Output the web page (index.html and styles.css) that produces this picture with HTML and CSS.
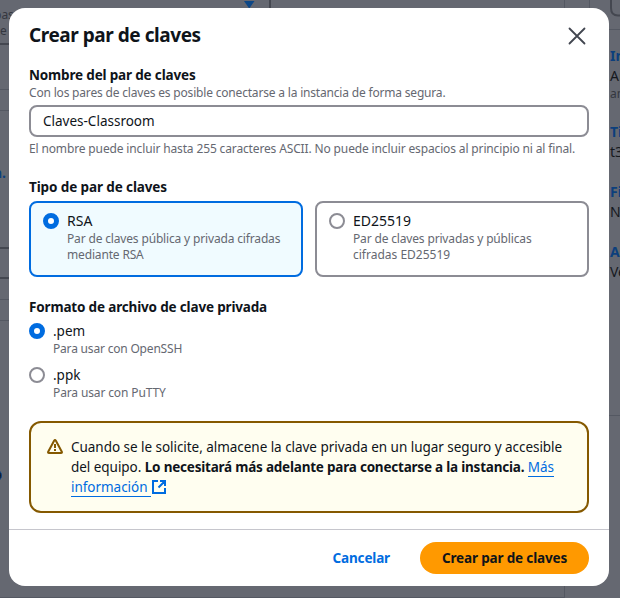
FILE: index.html
```html
<!DOCTYPE html>
<html lang="es">
<head>
<meta charset="utf-8">
<title>Crear par de claves</title>
<link rel="stylesheet" href="styles.css">
</head>
<body>
<svg class="backdrop" width="620" height="598" viewBox="0 0 620 598" aria-hidden="true">
  <g class="rule">
    <path d="M564.5 0V598M589.5 0V9M0 89.5H10M0 110.5H10M0 299.5H10M0 320.5H10M608 29.5H620M608 415.5H620M0 597.5H564"/>
  </g>
  <g class="frame">
    <path d="M270 0V10M0 44H10M0 248H10M0 278H10M611 0V8Q611 15.500 618 15.500H620"/>
  </g>
  <path class="caret" d="M244 1H254.500L249.250 8.500Z"/>
  <circle class="dot" cx="-4.500" cy="475.500" r="6"/>
  <g class="muted"><text x="-6" y="19">bas</text><text x="0" y="35">e</text><text x="610" y="98">am</text></g>
  <g class="link"><text x="-7" y="178">n.</text><text x="610" y="61">In</text><text x="610" y="137">Ti</text><text x="610" y="197">Fi</text><text x="610" y="257">A</text></g>
  <g class="value"><text x="610" y="81">Am</text><text x="610" y="157">t3</text><text x="610" y="217">N</text><text x="610" y="277">Ve</text></g>
</svg>
<main class="modal">
  <header class="modal-header">
    <h1>Crear par de claves</h1>
    <svg class="close" width="18" height="18" viewBox="0 0 18 18"><path d="M1.500 1.500L16.500 16.500M16.500 1.500L1.500 16.500"/></svg>
  </header>
  <div class="modal-body">
    <section class="field">
      <div class="label">Nombre del par de claves</div>
      <div class="hint hint-name">Con los pares de claves es posible conectarse a la instancia de forma segura.</div>
      <div class="input">Claves-Classroom</div>
      <div class="hint hint-rule">El nombre puede incluir hasta 255 caracteres ASCII. No puede incluir espacios al principio ni al final.</div>
    </section>
    <section class="field">
      <div class="label label-type">Tipo de par de claves</div>
      <div class="tiles">
        <div class="tile selected">
          <span class="radio on"></span>
          <div><div class="option">RSA</div><div class="hint">Par de claves pública y privada cifradas<br>mediante RSA</div></div>
        </div>
        <div class="tile">
          <span class="radio"></span>
          <div><div class="option">ED25519</div><div class="hint">Par de claves privadas y públicas<br><span class="plain">cifradas ED25519</span></div></div>
        </div>
      </div>
    </section>
    <section class="field">
      <div class="label">Formato de archivo de clave privada</div>
      <div class="choices">
        <div class="choice">
          <span class="radio on"></span>
          <div><div class="option option-format">.pem</div><div class="hint hint-pem">Para usar con OpenSSH</div></div>
        </div>
        <div class="choice">
          <span class="radio"></span>
          <div><div class="option option-format">.ppk</div><div class="hint hint-ppk">Para usar con PuTTY</div></div>
        </div>
      </div>
    </section>
    <div class="alert">
      <svg class="warning" width="16" height="16" viewBox="0 0 16 16"><path d="M7.100 1.700Q8 0.400 8.900 1.700L14.800 12.700Q15.300 14 14 14H2Q0.700 14 1.200 12.700Z"/><path class="mark" d="M8 5V9M8 10V12"/></svg>
      <p>Cuando se le solicite, almacene la clave privada en un lugar seguro y accesible<br>del equipo. <b>Lo necesitará más adelante para conectarse a la instancia.</b> <a>Más</a><br><a>información&nbsp;</a><svg class="external" width="16" height="16" viewBox="0 0 16 16"><path d="M7 2H2V14H14V9M9 2H14V7M14 2L7.500 8.500"/></svg></p>
    </div>
  </div>
  <footer class="modal-footer">
    <div class="cancel">Cancelar</div>
    <div class="submit">Crear par de claves</div>
  </footer>
</main>
</body>
</html>
```
FILE: styles.css
```css
* { box-sizing: border-box; }
body {
  margin: 0;
  height: 598px;
  overflow: hidden;
  background: #656871;
  color: #0f141a;
  font: 13.5px/20px "Noto Sans", sans-serif;
}
.backdrop { position: absolute; top: 0; left: 0; }
.rule { stroke: #545862; fill: none; }
.frame { stroke: #444750; stroke-width: 2; fill: none; }
.caret { fill: #0d4786; }
.dot { fill: #0e1830; stroke: #0d4786; }
.muted { fill: #34373f; font-size: 12px; }
.link { fill: #0c3f7c; font-size: 14px; font-weight: 700; }
.value { fill: #15181e; font-size: 14px; }

.modal {
  position: relative;
  width: 600px;
  height: 578px;
  margin: 8px 0 0 9px;
  display: flex;
  flex-direction: column;
  background: #fff;
  border-radius: 16px;
}
.modal-header {
  height: 57px;
  padding: 15px 23px 0 20px;
  display: flex;
  justify-content: space-between;
  align-items: flex-start;
}
h1 {
  margin: 0;
  font-size: 19px;
  line-height: 24px;
  letter-spacing: -0.45px;
}
.close { margin-top: 4px; fill: none; stroke: #424650; stroke-width: 1.8; stroke-linecap: round; }
.modal-body {
  flex: 1;
  padding: 0 20px;
  display: flex;
  flex-direction: column;
  gap: 20px;
}
.label { font-weight: 700; letter-spacing: -0.165px; }
.label-type { letter-spacing: -0.11px; }
.hint { color: #656871; font-size: 12px; line-height: 16px; letter-spacing: -0.16px; white-space: nowrap; }
.hint-name { letter-spacing: -0.185px; }
.hint-rule { letter-spacing: -0.14px; }
.hint-pem { letter-spacing: -0.19px; }
.hint-ppk { letter-spacing: -0.13px; }
.plain { letter-spacing: 0; }
.input {
  height: 32px;
  margin: 4px 0;
  padding: 4px 12px;
  border: 2px solid #8c8c94;
  border-radius: 8px;
}
.tiles { display: grid; grid-template-columns: 1fr 1fr; gap: 12px; margin-top: 4px; }
.tile {
  height: 76px;
  padding: 8px 12px;
  display: flex;
  gap: 8px;
  border: 2px solid #8c8c94;
  border-radius: 8px;
}
.tile.selected { border-color: #006ce0; background: #f0fbff; }
.radio {
  flex: none;
  width: 16px;
  height: 16px;
  margin-top: 2px;
  border: 2px solid #8c8c94;
  border-radius: 50%;
  background: #fff;
}
.radio.on { border: 5px solid #006ce0; }
.option { font-size: 14px; }
.option-format { font-size: 13.5px; }
.choices { display: flex; flex-direction: column; gap: 8px; margin-top: 4px; }
.choice { display: flex; gap: 8px; }
.alert {
  height: 92px;
  padding: 14px 16px;
  display: flex;
  gap: 8px;
  border: 2px solid #855900;
  border-radius: 12px;
  background: #fffef0;
}
.alert p { margin: 0; white-space: nowrap; letter-spacing: -0.04px; }
.alert b { letter-spacing: -0.215px; }
.alert a { color: #006ce0; border-bottom: 1px solid #006ce0; }
.warning { flex: none; margin-top: 2px; fill: none; stroke: #855900; stroke-width: 2; stroke-linejoin: round; }
.warning .mark { stroke-linecap: butt; }
.external { vertical-align: -3px; fill: none; stroke: #006ce0; stroke-width: 2; }
.modal-footer {
  height: 57px;
  padding: 12px 20px;
  display: flex;
  justify-content: flex-end;
  gap: 30px;
  border-top: 1px solid #c6c6cd;
  font-weight: 700;
  line-height: 32px;
}
.cancel { color: #006ce0; letter-spacing: -0.15px; }
.submit {
  width: 169px;
  height: 32px;
  border-radius: 16px;
  background: #ff9900;
  text-align: center;
  letter-spacing: -0.155px;
}
```
